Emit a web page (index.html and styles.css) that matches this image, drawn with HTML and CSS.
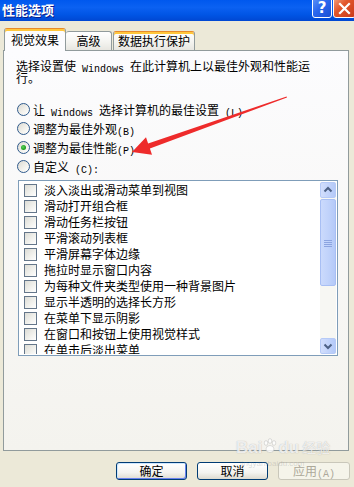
FILE: index.html
```html
<!DOCTYPE html>
<html lang="zh-CN">
<head>
<meta charset="utf-8">
<title>性能选项</title>
<link rel="stylesheet" href="styles.css">
</head>
<body>
<div class="window">
  <div class="titlebar">
    <span class="title">性能选项</span>
    <div class="tb-btns">
      <span class="tb-help">?</span>
      <span class="tb-close"><svg width="19" height="18" viewBox="0 0 19 18"><path d="M5 4 L14 13 M14 4 L5 13" stroke="#fff" stroke-width="2.2" stroke-linecap="square"/></svg></span>
    </div>
  </div>
  <div class="body">
    <div class="tabs">
      <div class="tab sel">视觉效果</div>
      <div class="tab t2">高级</div>
      <div class="tab t3 hot">数据执行保护</div>
    </div>
    <div class="panel">
      <p class="intro">选择设置使<span class="lat"> Windows </span>在此计算机上以最佳外观和性能运<br>行。</p>
      <div class="radios">
        <div class="radio"><span class="rb"></span><span class="lbl">让<span class="lat"> Windows </span>选择计算机的最佳设置<span class="lat"> (L)</span></span></div>
        <div class="radio"><span class="rb"></span><span class="lbl">调整为最佳外观<span class="lat">(B)</span></span></div>
        <div class="radio"><span class="rb on"></span><span class="lbl">调整为最佳性能<span class="lat">(P)</span></span></div>
        <div class="radio"><span class="rb"></span><span class="lbl">自定义<span class="lat"> (C):</span></span></div>
      </div>
      <div class="list">
        <div class="items">
          <div class="item"><span class="cb"></span>淡入淡出或滑动菜单到视图</div>
          <div class="item"><span class="cb"></span>滑动打开组合框</div>
          <div class="item"><span class="cb"></span>滑动任务栏按钮</div>
          <div class="item"><span class="cb"></span>平滑滚动列表框</div>
          <div class="item"><span class="cb"></span>平滑屏幕字体边缘</div>
          <div class="item"><span class="cb"></span>拖拉时显示窗口内容</div>
          <div class="item"><span class="cb"></span>为每种文件夹类型使用一种背景图片</div>
          <div class="item"><span class="cb"></span>显示半透明的选择长方形</div>
          <div class="item"><span class="cb"></span>在菜单下显示阴影</div>
          <div class="item"><span class="cb"></span>在窗口和按钮上使用视觉样式</div>
          <div class="item"><span class="cb"></span>在单击后淡出菜单</div>
        </div>
        <div class="sb">
          <div class="sb-btn"><svg width="14" height="14" viewBox="0 0 14 14"><path d="M3.5 8.5 L7 5 L10.5 8.5" fill="none" stroke="#4D6185" stroke-width="2"/></svg></div>
          <div class="sb-thumb"><svg width="8" height="8" viewBox="0 0 8 8"><path d="M0 1.5H8M0 3.5H8M0 5.5H8M0 7.5H8" stroke="#8CA4E0" stroke-width="1"/></svg></div>
          <div class="sb-track"></div>
          <div class="sb-btn"><svg width="14" height="14" viewBox="0 0 14 14"><path d="M3.5 5.5 L7 9 L10.5 5.5" fill="none" stroke="#4D6185" stroke-width="2"/></svg></div>
        </div>
      </div>
    </div>
    <div class="buttons">
      <div class="btn def">确定</div>
      <div class="btn">取消</div>
      <div class="btn dis">应用<span class="lat">(A)</span></div>
    </div>
  </div>
  <svg class="arrow" width="354" height="487" viewBox="0 0 354 487">
    <polygon points="132,152 152,154.8 149.9,148.6 287,97.6 286.6,96.4 148.1,143.4 146,137.3" fill="#EE2B2B"/>
  </svg>
  <div class="wm">
    <span class="wm-logo">Bai<svg class="paw" width="16" height="16" viewBox="0 0 16 16"><g fill="rgba(255,255,255,0.8)" stroke="rgba(140,140,140,0.35)" stroke-width="0.8"><ellipse cx="4" cy="5" rx="1.8" ry="2.3"/><ellipse cx="8" cy="3" rx="1.8" ry="2.3"/><ellipse cx="12" cy="5" rx="1.8" ry="2.3"/><ellipse cx="8" cy="11" rx="4" ry="3.5"/></g></svg>du</span><span class="wm-cn">经验</span>
    <div class="wm-url">jingyan.baidu.com</div>
  </div>
</div>
</body>
</html>
```
FILE: styles.css
```css
html, body {
  margin: 0;
  padding: 0;
}
body {
  width: 354px;
  height: 487px;
  overflow: hidden;
  background: #ECE9D8;
  font-family: "Noto Sans CJK SC", "Noto Sans", sans-serif;
  font-size: 12px;
  color: #000;
}
.window {
  position: relative;
  width: 354px;
  height: 487px;
  overflow: hidden;
}
.lat {
  font-family: "Liberation Mono", monospace;
  font-size: 10px;
  line-height: 0;
  vertical-align: -1px;
  white-space: pre;
}

/* title bar */
.titlebar {
  height: 21px;
  display: flex;
  justify-content: space-between;
  align-items: flex-start;
  background: linear-gradient(to bottom, #0058EE 0%, #0B61F2 35%, #0055E5 70%, #0047D2 100%);
}
.title {
  color: #fff;
  font-weight: bold;
  font-size: 13px;
  line-height: 15px;
  padding: 2px 0 0 2px;
  text-shadow: 1px 1px 0 #0A1E8C;
}
.tb-btns {
  display: flex;
  margin-top: -3px;
  margin-right: -2px;
}
.tb-help, .tb-close {
  box-sizing: border-box;
  height: 21px;
  border: 1px solid #fff;
  border-radius: 3px;
  display: flex;
  align-items: center;
  justify-content: center;
}
.tb-help {
  width: 20px;
  background: linear-gradient(135deg, #5F94F6 0%, #2A67EE 45%, #1A4FD3 100%);
  color: #fff;
  font-family: "DejaVu Sans", sans-serif;
  font-weight: bold;
  font-size: 15px;
  line-height: 15px;
  padding-top: 2px;
}
.tb-close {
  width: 23px;
  margin-left: 1px;
  padding-top: 2px;
  background: linear-gradient(135deg, #F0A080 0%, #E2572C 40%, #C8391A 100%);
}

/* body */
.body {
  padding: 7px 5px 0 3px;
}
.tabs {
  display: flex;
  align-items: flex-end;
  height: 22px;
  margin-left: 1px;
  position: relative;
  z-index: 1;
}
.tab {
  box-sizing: border-box;
  height: 19px;
  border: 1px solid #919B9C;
  border-bottom: none;
  border-radius: 3px 3px 0 0;
  background: linear-gradient(#FFFFFF, #F4F4F0 55%, #E7E6E0);
  line-height: 18px;
  text-align: center;
  font-size: 12px;
}
.tab.sel {
  width: 62px;
  height: 23px;
  margin-bottom: -1px;
  line-height: 21px;
  background: #FCFCFE;
  border-top-color: #E68B2C;
  box-shadow: inset 0 2px 0 #FFC73C;
}
.tab.t2 {
  width: 46px;
  border-left: none;
}
.tab.t3 {
  width: 82px;
  margin-left: 1px;
}
.tab.hot {
  border-top-color: #E68B2C;
  box-shadow: inset 0 2px 0 #FFC73C;
}

.panel {
  box-sizing: border-box;
  height: 401px;
  border: 1px solid #919B9C;
  background: linear-gradient(#FCFCFE, #F4F3EE);
  overflow: hidden;
}
.intro {
  margin: 9px 0 0 12px;
  line-height: 12px;
}
.radios {
  margin: 16px 0 0 13px;
  display: flex;
  flex-direction: column;
}
.radio {
  height: 19px;
  display: flex;
  align-items: center;
  white-space: nowrap;
}
.lbl {
  line-height: 14px;
}
.rb {
  box-sizing: border-box;
  width: 13px;
  height: 13px;
  border: 1px solid #2F5A8C;
  border-radius: 50%;
  background: linear-gradient(135deg, #DCDAD2 0%, #F4F3EE 60%, #FFFFFF 100%);
  margin-right: 3px;
  display: flex;
  align-items: center;
  justify-content: center;
  flex: none;
}
.rb.on::after {
  content: "";
  width: 5px;
  height: 5px;
  border-radius: 50%;
  background: radial-gradient(circle at 40% 40%, #5FD35F, #21A121 60%, #1A8A1A);
}

/* list */
.list {
  box-sizing: border-box;
  margin: 4px 0 0 14px;
  width: 320px;
  height: 176px;
  border: 1px solid #7F9DB9;
  background: #fff;
  padding: 1px;
  display: flex;
}
.items {
  flex: 1;
  overflow: hidden;
}
.item {
  height: 16px;
  line-height: 16px;
  display: flex;
  align-items: center;
  white-space: nowrap;
}
.cb {
  box-sizing: border-box;
  width: 13px;
  height: 13px;
  margin: 0 7px 0 4px;
  border: 1px solid #64768A;
  background: linear-gradient(135deg, #DCDCD6 0%, #F2F2EE 60%, #FFFFFF 100%);
  flex: none;
}
.sb {
  width: 16px;
  display: flex;
  flex-direction: column;
  background: #F7F7F3;
}
.sb-btn {
  box-sizing: border-box;
  height: 16px;
  border: 1px solid #B6CAF7;
  border-radius: 2px;
  background: linear-gradient(90deg, #D2DEFC 0%, #C3D4FB 50%, #B4C9F8 100%);
  display: flex;
  align-items: center;
  justify-content: center;
}
.sb-thumb {
  box-sizing: border-box;
  height: 87px;
  margin-top: 1px;
  border: 1px solid #A8BFF4;
  border-radius: 2px;
  background: linear-gradient(90deg, #CBDAFC 0%, #C1D3FB 50%, #B4C9F8 100%);
  display: flex;
  align-items: center;
  justify-content: center;
}
.sb-track {
  flex: 1;
}

/* buttons */
.buttons {
  display: flex;
  justify-content: flex-end;
  gap: 10px;
  margin: 11px -1px 0 0;
}
.btn {
  box-sizing: border-box;
  width: 71px;
  height: 18px;
  border: 1px solid #003C74;
  border-radius: 3px;
  background: linear-gradient(#FFFFFF 0%, #F4F4F0 60%, #DEDBD0 100%);
  line-height: 16px;
  text-align: center;
  font-size: 12px;
}
.btn.def {
  box-shadow: inset 1px 1px 0 #CEE7FF, inset -1px -1px 0 #6982EE;
}
.btn.dis {
  width: 72px;
  border-color: #C9C7BA;
  color: #ACA899;
  background: #F5F4EA;
}

/* overlays */
.arrow {
  position: absolute;
  left: 0;
  top: 0;
  pointer-events: none;
}
.wm {
  position: absolute;
  left: 236px;
  top: 437px;
  pointer-events: none;
}
.wm-logo {
  font-family: "Liberation Sans", sans-serif;
  font-weight: bold;
  font-size: 17px;
  line-height: 18px;
  color: rgba(255, 255, 255, 0.8);
  text-shadow: 0 0 1px rgba(110, 110, 110, 0.55);
}
.paw {
  vertical-align: -1px;
}
.wm-cn {
  font-size: 14px;
  margin-left: 3px;
  color: rgba(255, 255, 255, 0.8);
  text-shadow: 0 0 1px rgba(110, 110, 110, 0.55);
}
.wm-url {
  font-family: "Liberation Sans", sans-serif;
  font-size: 8px;
  line-height: 8px;
  margin: 3px 0 0 4px;
  color: rgba(140, 140, 140, 0.3);
}
```
